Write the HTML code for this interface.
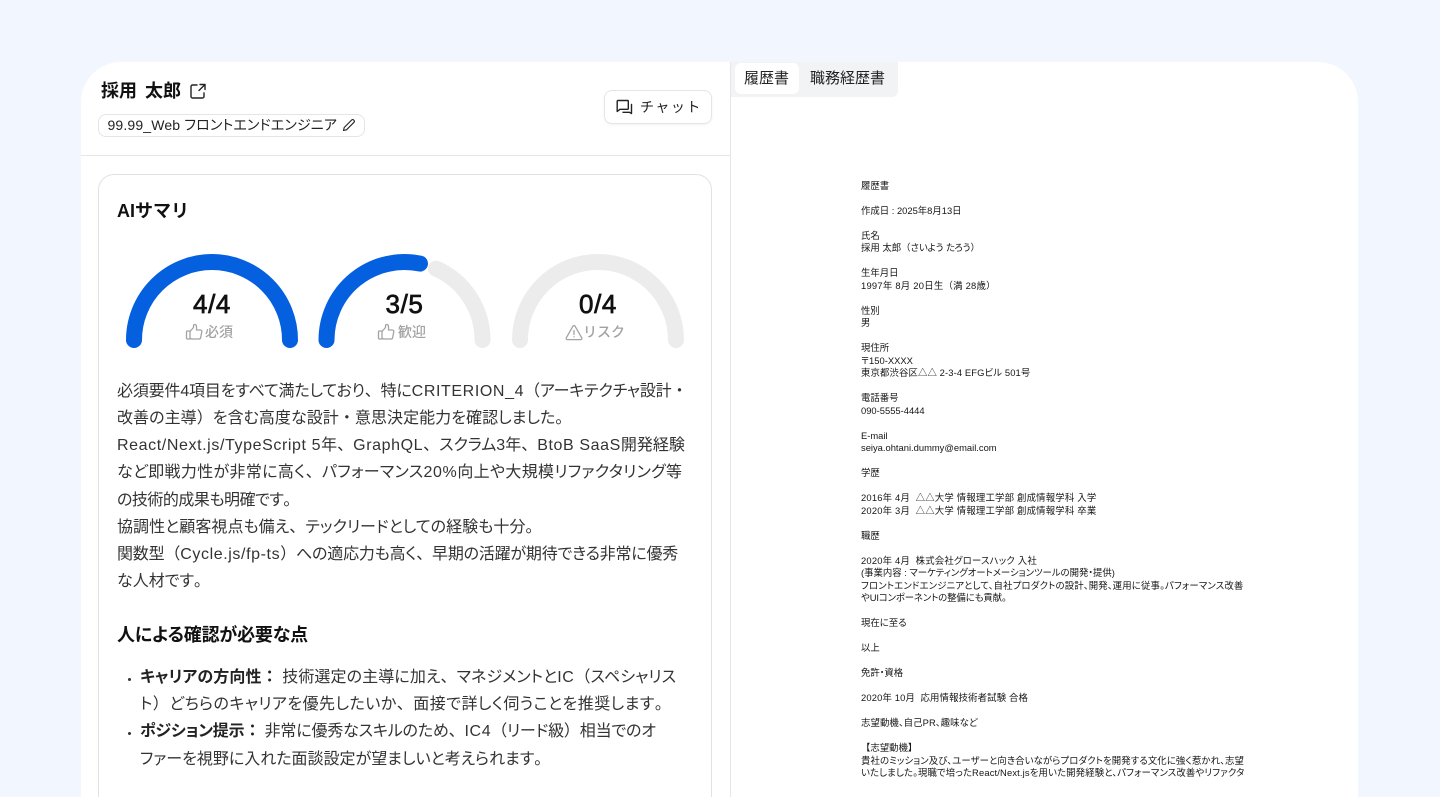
<!DOCTYPE html>
<html lang="ja"><head><meta charset="utf-8"><title>採用 太郎</title>
<style>
*{box-sizing:border-box;margin:0;padding:0}
html,body{width:1440px;height:797px;overflow:hidden;background:#f2f6fe}
body{position:relative;font-family:"Liberation Sans","Noto Sans CJK JP",sans-serif;color:#1c1c1c;font-feature-settings:"palt"}
.a{position:absolute}
.t{position:absolute;white-space:nowrap;height:20px;line-height:20px}
.b{font-size:16px;left:117px;color:#333}
.b i{font-style:normal;letter-spacing:.6px}
em{font-style:normal;font-feature-settings:normal}
.l{left:140px}
.g{font-size:14px;color:#a3a3a3;font-weight:500;font-feature-settings:normal}
.n{font-size:26px;font-weight:400;color:#111;text-align:center;width:100px;height:30px;line-height:30px;-webkit-text-stroke:.7px #111;letter-spacing:.6px}
svg{position:absolute;overflow:visible}
#doc{position:absolute;left:861px;top:179.5px;width:400px;font-size:9.4px;line-height:12.5px;color:#151515;white-space:pre}
b{font-weight:700;color:#222}
</style></head><body>
<div class="a" style="left:81px;top:62px;width:1277px;height:760px;background:#fff;border-radius:40px 40px 0 0"></div>
<div class="a" style="left:730px;top:62px;width:1px;height:735px;background:#e6e6e6"></div>
<div class="a" style="left:81px;top:155px;width:649px;height:1px;background:#e6e6e6"></div>

<div class="t" style="left:101px;top:81px;font-size:18px;font-weight:700;color:#111;word-spacing:3px;font-feature-settings:normal">採用 太郎</div>
<svg style="left:190px;top:83px" width="16" height="16" viewBox="0 0 16 16" fill="none" stroke="#222" stroke-width="1.400" stroke-linecap="round" stroke-linejoin="round"><path d="M7 2H2.500A1.500 1.500 0 0 0 1 3.500V13.500A1.500 1.500 0 0 0 2.500 15H12.500A1.500 1.500 0 0 0 14 13.500V10"/><path d="M10 1.500H15V6.500M15 1.500L9 7.500"/></svg>

<div class="a" style="left:98px;top:114px;width:267px;height:23px;border:1px solid #e5e5e5;border-radius:8px"></div>
<div class="t" style="left:107.500px;top:115px;font-size:14px;color:#222;letter-spacing:.15px">99.99_Web フロントエンドエンジニア</div>
<svg style="left:342px;top:118px" width="14" height="14" viewBox="0 0 14 14" fill="none" stroke="#222" stroke-width="1.100" stroke-linejoin="round"><path d="M1.500 12.500l.7-3L9.800 1.900a1.200 1.200 0 0 1 1.700 0l.6.6a1.200 1.200 0 0 1 0 1.700L4.500 11.800z"/></svg>

<div class="a" style="left:604px;top:90px;width:108px;height:34px;border:1px solid #e5e5e5;border-radius:8px;box-shadow:0 1px 2px rgba(0,0,0,.05)"></div>
<svg style="left:616px;top:99px" width="17" height="16" viewBox="0 0 17 16" fill="none" stroke="#222" stroke-width="1.400" stroke-linecap="round" stroke-linejoin="round"><path d="M2 1.500H11.500A.8.8 0 0 1 12.300 2.300V9.500A.8.8 0 0 1 11.500 10.300H4L1.200 12.500V2.300A.8.8 0 0 1 2 1.500z"/><path d="M15.500 5.500V14.500L13.500 13.300H7"/></svg>
<div class="t" style="left:640px;top:96.500px;font-size:14px;letter-spacing:1.500px;color:#222;font-feature-settings:normal">チャット</div>

<div class="a" style="left:731px;top:62px;width:167px;height:35px;background:#f2f3f5;border-radius:0 0 6px 0"></div>
<div class="a" style="left:735px;top:63px;width:64px;height:31px;background:#fff;border-radius:6px"></div>
<div class="t" style="left:744px;top:69px;font-size:15px;color:#222;font-feature-settings:normal">履歴書</div>
<div class="t" style="left:810px;top:69px;font-size:15px;color:#222;font-feature-settings:normal">職務経歴書</div>

<div class="a" style="left:98px;top:174px;width:614px;height:700px;border:1px solid #e2e2e2;border-radius:16px"></div>
<div class="t" style="left:117px;top:201px;font-size:18px;font-weight:700;color:#111;font-feature-settings:normal">AIサマリ</div>

<svg style="left:0;top:0" width="1440" height="797" fill="none" stroke-width="16" stroke-linecap="round">
<path d="M134 340A78 78 0 0 1 290 340" stroke="#0560e0"/>
<path d="M436 268.600A78 78 0 0 1 482.500 340" stroke="#ececec"/>
<path d="M326.500 340A78 78 0 0 1 420 263.560" stroke="#0560e0"/>
<path d="M520 340A78 78 0 0 1 676 340" stroke="#ececec"/>
</svg>

<div class="t n" style="left:162px;top:289px">4/4</div>
<div class="t n" style="left:354.500px;top:289px">3/5</div>
<div class="t n" style="left:548px;top:289px">0/4</div>

<svg style="left:185px;top:323px" width="18" height="18" viewBox="0 0 18 18" fill="none" stroke="#a3a3a3" stroke-width="1.300" stroke-linejoin="round" stroke-linecap="round"><path d="M5 8h-2.500a1 1 0 0 0-1 1v6a1 1 0 0 0 1 1H5zM5 8.500l3.500-4V2.500c0-1.500 3-1.500 3 1.200V7h3.800c1 0 1.700.9 1.500 1.800l-1.200 6c-.2.8-.8 1.200-1.500 1.200H7.500L5 15.500"/></svg>
<div class="t g" style="left:205px;top:322px">必須</div>
<svg style="left:377px;top:323px" width="18" height="18" viewBox="0 0 18 18" fill="none" stroke="#a3a3a3" stroke-width="1.300" stroke-linejoin="round" stroke-linecap="round"><path d="M5 8h-2.500a1 1 0 0 0-1 1v6a1 1 0 0 0 1 1H5zM5 8.500l3.500-4V2.500c0-1.500 3-1.500 3 1.200V7h3.800c1 0 1.700.9 1.500 1.800l-1.200 6c-.2.8-.8 1.200-1.500 1.200H7.500L5 15.500"/></svg>
<div class="t g" style="left:398px;top:322px">歓迎</div>
<svg style="left:565px;top:324px" width="18" height="17" viewBox="0 0 18 17" fill="none" stroke="#a3a3a3" stroke-width="1.300" stroke-linejoin="round" stroke-linecap="round"><path d="M9 1.500a1.200 1.200 0 0 1 1 .6l6.700 11.700a1.200 1.200 0 0 1-1 1.800H2.300a1.200 1.200 0 0 1-1-1.800L8 2.100a1.200 1.200 0 0 1 1-.6z"/><path d="M9 6.500v4M9 12.800v.1"/></svg>
<div class="t g" style="left:583px;top:322px">リスク</div>

<div class="t b" style="top:382px;letter-spacing:-.17px">必須要件4項目をすべて満たしており<em>、</em>特に<i>CRITERION_4</i><em>（</em>アーキテクチャ設計<em>・</em></div>
<div class="t b" style="top:409px;letter-spacing:.05px">改善の主導<em>）</em>を含む高度な設計<em>・</em>意思決定能力を確認しました<em>。</em></div>
<div class="t b" style="top:436px"><i>React/Next.js/TypeScript 5</i>年<em>、</em><i>GraphQL</i><em>、</em>スクラム3年<em>、</em><i>BtoB SaaS</i>開発経験</div>
<div class="t b" style="top:463px;letter-spacing:.33px">など即戦力性が非常に高く<em>、</em>パフォーマンス<i>20%</i>向上や大規模リファクタリング等</div>
<div class="t b" style="top:491px;letter-spacing:-.5px">の技術的成果も明確です<em>。</em></div>
<div class="t b" style="top:518px;letter-spacing:.05px">協調性と顧客視点も備え<em>、</em>テックリードとしての経験も十分<em>。</em></div>
<div class="t b" style="top:545px;letter-spacing:-.2px">関数型<em>（</em><i>Cycle.js/fp-ts</i><em>）</em>への適応力も高く<em>、</em>早期の活躍が期待できる非常に優秀</div>
<div class="t b" style="top:572px">な人材です<em>。</em></div>

<div class="t" style="left:117px;top:625px;font-size:18px;font-weight:700;color:#111;letter-spacing:-.2px">人による確認が必要な点</div>

<div class="a" style="left:127.500px;top:678px;width:3px;height:3px;border-radius:50%;background:#333"></div>
<div class="t b l" style="top:668px;letter-spacing:.1px"><b>キャリアの方向性<em>：</em></b> 技術選定の主導に加え<em>、</em>マネジメントと<i>IC</i><em>（</em>スペシャリス</div>
<div class="t b l" style="top:695px;letter-spacing:.47px">ト<em>）</em>どちらのキャリアを優先したいか<em>、</em>面接で詳しく伺うことを推奨します<em>。</em></div>
<div class="a" style="left:127.500px;top:732px;width:3px;height:3px;border-radius:50%;background:#333"></div>
<div class="t b l" style="top:722px;letter-spacing:-.17px"><b>ポジション提示<em>：</em></b> 非常に優秀なスキルのため<em>、</em><i>IC4</i><em>（</em>リード級<em>）</em>相当でのオ</div>
<div class="t b l" style="top:750px">ファーを視野に入れた面談設定が望ましいと考えられます<em>。</em></div>

<div id="doc">履歴書

作成日 : 2025年8月13日

氏名
採用 太郎<em>（</em>さいよう たろう<em>）</em>

生年月日
<span style="letter-spacing:.25px">1997年 8月 20日生<em>（</em>満 28歳<em>）</em></span>

性別
男

現住所
〒150-XXXX
<span style="letter-spacing:.12px">東京都渋谷区△△ 2-3-4 EFGビル 501号</span>

電話番号
090-5555-4444

E-mail
seiya.ohtani.dummy@email.com

学歴

<span style="letter-spacing:.2px">2016年 4月  △△大学 情報理工学部 創成情報学科 入学</span>
<span style="letter-spacing:.2px">2020年 3月  △△大学 情報理工学部 創成情報学科 卒業</span>

職歴

<span style="letter-spacing:.2px">2020年 4月  株式会社グロースハック 入社</span>
(事業内容 : マーケティングオートメーションツールの開発・提供)
<span style="letter-spacing:.18px">フロントエンドエンジニアとして、自社プロダクトの設計、開発、運用に従事。パフォーマンス改善</span>
<span style="letter-spacing:-.1px">やUIコンポーネントの整備にも貢献。</span>

現在に至る

以上

免許・資格

<span style="letter-spacing:.15px">2020年 10月  応用情報技術者試験 合格</span>

<span style="letter-spacing:.1px">志望動機、自己PR、趣味など</span>

<em>【</em>志望動機<em>】</em>
<span style="letter-spacing:.11px">貴社のミッション及び、ユーザーと向き合いながらプロダクトを開発する文化に強く惹かれ、志望</span>
<span style="letter-spacing:.15px">いたしました。現職で培ったReact/Next.jsを用いた開発経験と、パフォーマンス改善やリファクタ</span></div>
</body></html>
